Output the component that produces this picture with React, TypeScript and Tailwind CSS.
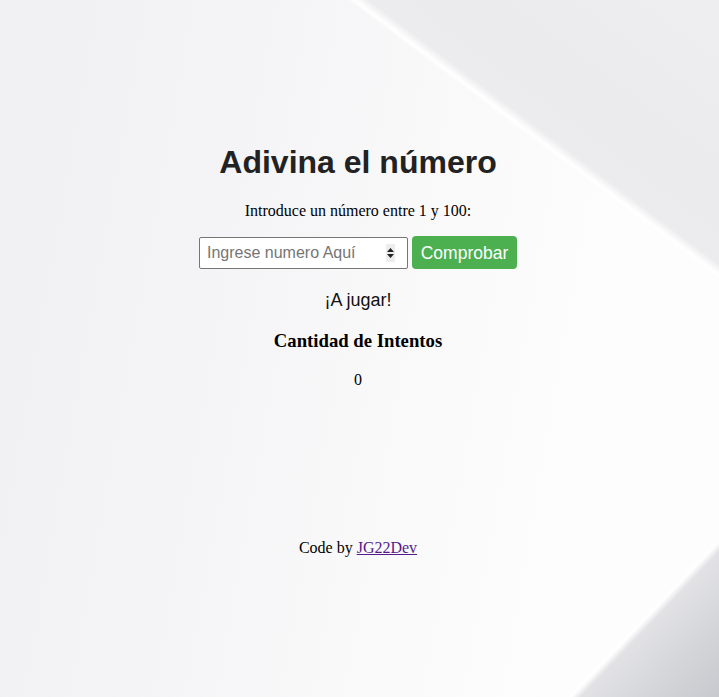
import React from "react";

export default function App() {
  return (
    <div className="min-h-screen w-full bg-[linear-gradient(37deg,transparent_77.4%,#ffffff_77.8%,#ececee_78.7%,#ebebed_84%,#eeeef0_100%),linear-gradient(133.6deg,transparent_88.9%,#ffffff_89.3%,#e2e2e5_90%,#d5d6da_94.5%,#c8c9ce_100%),linear-gradient(100deg,#f0f0f2_0%,#f4f4f6_30%,#f9f9fa_55%,#fdfdfd_80%)] text-center font-['Liberation_Serif',serif] text-black">
      <div className="flex flex-col items-center pr-[3px] pt-[144px]">
        <h1 className="font-['Liberation_Sans',Arial,sans-serif] text-[32px] font-bold leading-[37px] text-[#222]">
          Adivina el número
        </h1>
        <p className="mt-[21px] text-[16px] leading-[18px]">
          Introduce un número entre 1 y 100:
        </p>
        <div className="mt-[16px] flex items-center gap-[4px]">
          <div className="relative">
            <input
              type="text"
              placeholder="Ingrese numero Aquí"
              className="h-[32px] w-[209px] rounded-[2px] border border-[#767676] bg-white px-[7px] font-['Liberation_Sans',Arial,sans-serif] text-[16px] text-black outline-none placeholder:text-[#757575]"
            />
            <span className="pointer-events-none absolute right-[13px] top-[7px] flex h-[18px] w-[9px] flex-col items-center justify-center gap-[2px] bg-[#ededed]">
              <svg width="7" height="4" viewBox="0 0 7 4">
                <path d="M0 4 L3.5 0 L7 4 Z" fill="#222" />
              </svg>
              <svg width="7" height="4" viewBox="0 0 7 4">
                <path d="M0 0 L3.5 4 L7 0 Z" fill="#222" />
              </svg>
            </span>
          </div>
          <button className="h-[33px] w-[105px] rounded-[4px] bg-[#4caf50] font-['Liberation_Sans',Arial,sans-serif] text-[17.5px] leading-[20px] text-white">
            Comprobar
          </button>
        </div>
        <p className="mt-[21px] font-['Liberation_Sans',Arial,sans-serif] text-[18px] leading-[21px] text-[#111]">
          ¡A jugar!
        </p>
        <h3 className="mt-[19px] text-[18.72px] font-bold leading-[21px]">
          Cantidad de Intentos
        </h3>
        <p className="mt-[20px] text-[16px] leading-[18px]">0</p>
        <footer className="mt-[150px] text-[16px] leading-[18px]">
          Code by{" "}
          <a href="#" className="text-[#551a8b] underline">
            JG22Dev
          </a>
        </footer>
      </div>
    </div>
  );
}
